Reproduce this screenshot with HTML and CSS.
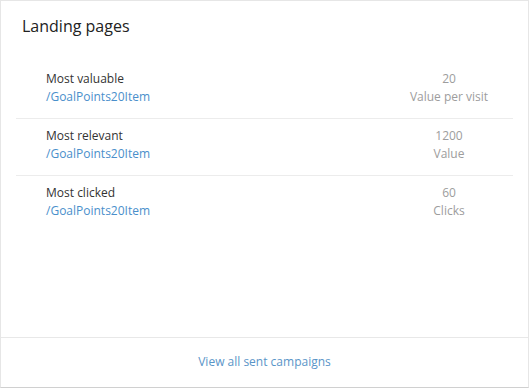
FILE: index.html
```html
<!DOCTYPE html>
<html>
<head>
<meta charset="utf-8">
<link rel="stylesheet" href="styles.css">
</head>
<body>
<div class="card">
  <div class="card-body">
    <h2 class="title">Landing pages</h2>
    <ul class="list">
      <li class="row">
        <div class="info">
          <div class="label">Most valuable</div>
          <a class="link">/GoalPoints20Item</a>
        </div>
        <div class="stat">
          <div class="num">20</div>
          <div class="unit">Value per visit</div>
        </div>
      </li>
      <li class="row">
        <div class="info">
          <div class="label">Most relevant</div>
          <a class="link">/GoalPoints20Item</a>
        </div>
        <div class="stat">
          <div class="num">1200</div>
          <div class="unit">Value</div>
        </div>
      </li>
      <li class="row">
        <div class="info">
          <div class="label">Most clicked</div>
          <a class="link">/GoalPoints20Item</a>
        </div>
        <div class="stat">
          <div class="num">60</div>
          <div class="unit">Clicks</div>
        </div>
      </li>
    </ul>
  </div>
  <div class="card-footer">
    <a class="footer-link">View all sent campaigns</a>
  </div>
</div>
</body>
</html>
```

FILE: styles.css
```css
* { box-sizing: border-box; }
html, body { margin: 0; padding: 0; background: #fff; }
body { font-family: "Open Sans", "Noto Sans", sans-serif; color: #333; }
.card {
  width: 529px;
  height: 388px;
  border: 1px solid #e6e6e6;
  border-bottom-color: #d0d0d0;
  display: flex;
  flex-direction: column;
  background: #fff;
}
.card-body { flex: 1; padding: 14px 15px 0 15px; }
.title {
  margin: 0 0 0 6px;
  font-size: 16px;
  font-weight: 400;
  line-height: 22px;
  color: #222;
}
.list { list-style: none; margin: 25px 0 0 0; padding: 0; }
.row {
  display: flex;
  align-items: center;
  justify-content: space-between;
  padding: 8px 14px 12px 30px;
  border-bottom: 1px solid #ececec;
  font-size: 12px;
  line-height: 18px;
}
.row:last-child { border-bottom: none; }
.label { color: #333; }
.link { color: #4a8fcb; text-decoration: none; }
.stat { width: 100px; text-align: center; color: #9d9d9d; }
.card-footer {
  height: 50px;
  border-top: 1px solid #e8e8e8;
  display: flex;
  align-items: center;
  justify-content: center;
  padding-bottom: 2px;
  font-size: 12px;
}
.footer-link { color: #5a95c8; text-decoration: none; }
```
